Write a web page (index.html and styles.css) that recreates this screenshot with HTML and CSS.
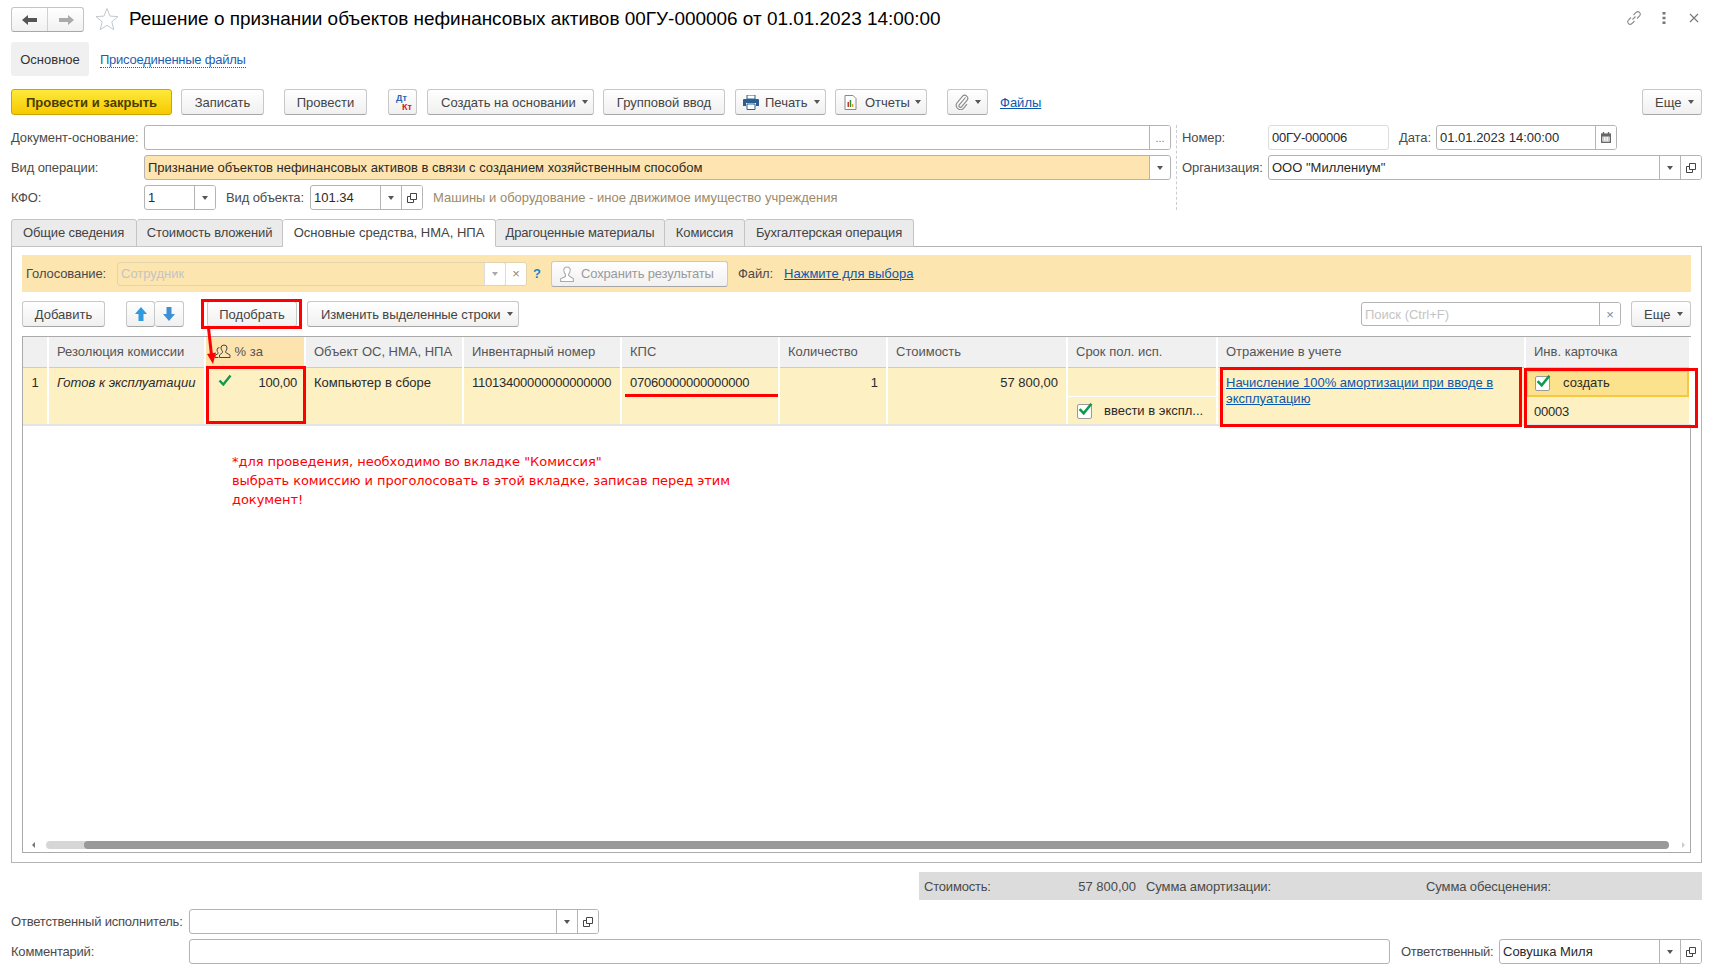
FILE: index.html
```html
<!DOCTYPE html>
<html lang="ru">
  <head>
    <meta charset="UTF-8" />
    <title>Решение о признании объектов нефинансовых активов</title>
    <link rel="stylesheet" href="styles.css">
  </head>
  <body>
    <svg class="sprite" width="0" height="0">
      <symbol id="i-open" viewBox="0 0 12 12">
        <path d="M4.5 1.5h6v6h-6zM4.5 4.5h-3v6h6v-3" fill="none" stroke="#444" stroke-width="1"/>
      </symbol>
      <symbol id="i-check" viewBox="0 0 14 12">
        <path d="M1.5 6.5l3.8 4L12.5 1.5" fill="none" stroke="#0e9a4f" stroke-width="2.4"/>
      </symbol>
    </svg>

    <div class="page">
      <!-- шапка -->
      <div class="title-row">
        <div class="nav">
          <span class="nav-part">
            <svg width="16" height="10" viewBox="0 0 16 10"><path d="M6 0v3h9v4H6v3L0 5z" fill="#555"/></svg>
          </span>
          <span class="nav-part">
            <svg width="16" height="10" viewBox="0 0 16 10"><path d="M10 0v3H1v4h9v3l6-5z" fill="#aaa"/></svg>
          </span>
        </div>
        <svg class="star" width="24" height="24" viewBox="0 0 24 24"><path d="M12 1.5l3 7.6 8 .5-6.200 5.100 2 8-6.800-4.400-6.800 4.400 2-8L1 9.600l8-.5z" fill="#fff" stroke="#c3c9cf"/></svg>
        <h1 class="title">Решение о признании объектов нефинансовых активов 00ГУ-000006 от 01.01.2023 14:00:00</h1>
        <div class="win-tools">
          <svg width="18" height="18" viewBox="0 0 18 18"><path d="M7.500 10.500l3-3M6 8.500l-2.800 2.800a2.500 2.500 0 0 0 3.500 3.500L9.500 12M8.500 6l2.800-2.800a2.500 2.500 0 0 1 3.500 3.500L12 9.500" fill="none" stroke="#8a8a8a" stroke-width="1.100"/></svg>
          <svg class="wt-dots" width="4" height="12" viewBox="0 0 4 12"><path d="M0.500 0h3v2.500h-3zM0.500 4.700h3v2.500h-3zM0.500 9.400h3v2.500h-3z" fill="#777"/></svg>
          <svg width="10" height="10" viewBox="0 0 10 10"><path d="M1 1l8 8M9 1l-8 8" stroke="#777" stroke-width="1.100"/></svg>
        </div>
      </div>

      <div class="subnav">
        <span class="subnav-active">Основное</span>
        <a class="subnav-link">Присоединенные файлы</a>
      </div>

      <!-- командная панель -->
      <div class="command-bar">
        <button class="btn btn-primary b-post-close">Провести и закрыть</button>
        <button class="btn b-save">Записать</button>
        <button class="btn b-post">Провести</button>
        <button class="btn b-dtkt"><span class="dt">Дт</span><span class="kt">Кт</span></button>
        <button class="btn btn-c b-create">Создать на основании<i class="caret"></i></button>
        <button class="btn b-group">Групповой ввод</button>
        <button class="btn btn-c b-print">
          <svg width="16" height="15" viewBox="0 0 16 15"><path d="M4 0h8v4H4z" fill="#fff" stroke="#2b5f8f"/><path d="M1 4h14a1 1 0 0 1 1 1v6h-3V8H3v3H0V5a1 1 0 0 1 1-1z" fill="#2b5f8f"/><path d="M4 9h8v5.500H4z" fill="#fff" stroke="#2b5f8f"/></svg>
          Печать<i class="caret"></i>
        </button>
        <button class="btn btn-c b-reports">
          <svg width="13" height="15" viewBox="0 0 12 15"><path d="M.5.500h8l3 3v11H.5z" fill="#fff" stroke="#888"/><path d="M3 7h1.500v5H3z" fill="#c0392b"/><path d="M5.200 5h1.500v7H5.200z" fill="#2e8b3d"/><path d="M7.400 9h1.500v3H7.400z" fill="#d9a521"/></svg>
          Отчеты<i class="caret"></i>
        </button>
        <button class="btn b-clip">
          <svg width="14" height="16" viewBox="0 0 14 16"><path d="M10.500 3.500L4.200 10.800a1.500 1.500 0 0 0 2.300 2L12 6.300a3 3 0 0 0-4.600-3.900L1.900 9a4.300 4.300 0 0 0 6.600 5.400l3.500-4.200" fill="none" stroke="#888" stroke-width="1.100"/></svg>
          <i class="caret"></i>
        </button>
        <a class="link files-link">Файлы</a>
        <button class="btn btn-c b-more">Еще<i class="caret"></i></button>
      </div>

      <!-- реквизиты -->
      <div class="form-head">
        <div class="form-left">
          <div class="form-row">
            <label class="lbl l-main">Документ-основание:</label>
            <div class="field f-grow"><span class="field-text"></span><span class="field-btn dots">...</span></div>
          </div>
          <div class="form-row">
            <label class="lbl l-main">Вид операции:</label>
            <div class="field f-grow field-warm"><span class="field-text">Признание объектов нефинансовых активов в связи с созданием хозяйственным способом</span><span class="field-btn"><i class="caret"></i></span></div>
          </div>
          <div class="form-row">
            <label class="lbl l-main">КФО:</label>
            <div class="field f-kfo"><span class="field-text">1</span><span class="field-btn"><i class="caret"></i></span></div>
            <label class="lbl l-kind">Вид объекта:</label>
            <div class="field f-kind"><span class="field-text">101.34</span><span class="field-btn"><i class="caret"></i></span><span class="field-btn"><svg class="open-ico"><use href="#i-open"/></svg></span></div>
            <span class="hint">Машины и оборудование - иное движимое имущество учреждения</span>
          </div>
        </div>
        <div class="form-right">
          <div class="form-row">
            <label class="lbl l-right">Номер:</label>
            <div class="field f-num field-soft"><span class="field-text digits">00ГУ-000006</span></div>
            <label class="lbl l-date">Дата:</label>
            <div class="field f-date"><span class="field-text">01.01.2023 14:00:00</span><span class="field-btn">
              <svg width="10" height="11" viewBox="0 0 11 12"><path d="M0 1.500h11V12H0z" fill="#666"/><path d="M2 0h1.500v3H2zM7.500 0H9v3H7.500z" fill="#666"/><path d="M1.500 5h8v5.500h-8z" fill="#fff"/><path d="M2.500 6h1v1h-1zM5 6h1v1H5zM7.500 6h1v1h-1zM2.500 8.200h1v1h-1zM5 8.200h1v1H5zM7.500 8.200h1v1h-1z" fill="#666"/></svg>
            </span></div>
          </div>
          <div class="form-row">
            <label class="lbl l-right">Организация:</label>
            <div class="field f-grow"><span class="field-text">ООО "Миллениум"</span><span class="field-btn"><i class="caret"></i></span><span class="field-btn"><svg class="open-ico"><use href="#i-open"/></svg></span></div>
          </div>
        </div>
      </div>

      <!-- вкладки -->
      <div class="tabs">
        <span class="tab t1">Общие сведения</span>
        <span class="tab t2">Стоимость вложений</span>
        <span class="tab t3 tab-active">Основные средства, НМА, НПА</span>
        <span class="tab t4">Драгоценные материалы</span>
        <span class="tab t5">Комиссия</span>
        <span class="tab t6">Бухгалтерская операция</span>
      </div>

      <div class="panel">
        <div class="vote-band">
          <label class="lbl l-vote">Голосование:</label>
          <div class="field f-vote"><span class="field-text ph">Сотрудник</span><span class="field-btn"><i class="caret caret-light"></i></span><span class="field-btn x-btn">×</span></div>
          <span class="help">?</span>
          <button class="btn b-results">
            <svg width="16" height="16" viewBox="0 0 14 15"><path d="M7 1a3 3 0 0 1 3 3c0 1.500-.8 3-1.500 3.700v1.200L13 12v2.500H1V12l4.500-2.100V7.700C4.800 7 4 5.500 4 4a3 3 0 0 1 3-3z" fill="#fff" stroke="#aaa"/></svg>
            Сохранить результаты
          </button>
          <label class="lbl l-file">Файл:</label>
          <a class="link">Нажмите для выбора</a>
        </div>

        <div class="table-bar">
          <button class="btn b-add">Добавить</button>
          <div class="updown">
            <button class="btn ud-part">
              <svg width="12" height="14" viewBox="0 0 12 14"><path d="M6 0l6 7H8.500v7h-5V7H0z" fill="#2f9ae0"/></svg>
            </button>
            <button class="btn ud-part">
              <svg width="12" height="14" viewBox="0 0 12 14"><path d="M6 14l6-7H8.500V0h-5v7H0z" fill="#3f8fd6"/></svg>
            </button>
          </div>
          <button class="btn b-pick">Подобрать</button>
          <button class="btn btn-c b-change">Изменить выделенные строки<i class="caret"></i></button>
          <div class="field f-search"><span class="field-text ph">Поиск (Ctrl+F)</span><span class="field-btn x-btn">×</span></div>
          <button class="btn btn-c b-more2">Еще<i class="caret"></i></button>
        </div>

        <div class="grid-wrap">
          <table class="grid">
            <colgroup>
              <col class="c-n"><col class="c-res"><col class="c-pct"><col class="c-obj"><col class="c-inv">
              <col class="c-kps"><col class="c-qty"><col class="c-cost"><col class="c-term"><col class="c-acc"><col class="c-card">
            </colgroup>
            <thead>
              <tr>
                <th></th>
                <th>Резолюция комиссии</th>
                <th class="th-warm">
                  <svg class="people" width="17" height="15" viewBox="0 0 17 15"><path d="M10 1a3 3 0 0 1 3 3c0 1.500-.7 2.600-1.300 3.200v1.300L16 11v2.500H5.500V11l3-2.500V7.200C8 6.600 7 5.500 7 4a3 3 0 0 1 3-3zM5.500 3.500a2.500 2.500 0 0 0-2.500 2.500c0 1 .5 2 1 2.500v1L1 11.500v2h3.500" fill="none" stroke="#444"/></svg>
                  % за
                </th>
                <th>Объект ОС, НМА, НПА</th>
                <th>Инвентарный номер</th>
                <th>КПС</th>
                <th>Количество</th>
                <th>Стоимость</th>
                <th>Срок пол. исп.</th>
                <th>Отражение в учете</th>
                <th>Инв. карточка</th>
              </tr>
            </thead>
            <tbody>
              <tr>
                <td class="td-num">1</td>
                <td class="td-it">Готов к эксплуатации</td>
                <td class="td-pct digits"><svg class="vote-check"><use href="#i-check"/></svg>100,00</td>
                <td>Компьютер в сборе</td>
                <td class="digits">11013400000000000000</td>
                <td class="digits">07060000000000000</td>
                <td class="td-r">1</td>
                <td class="td-r">57 800,00</td>
                <td class="td-split">
                  <div class="sub sub-top"></div>
                  <div class="sub sub-check"><span class="box"><svg><use href="#i-check"/></svg></span><span class="sub-text">ввести в экспл...</span></div>
                </td>
                <td><a class="link">Начисление 100% амортизации при вводе в эксплуатацию</a></td>
                <td class="td-split">
                  <div class="sub card-top"><span class="box"><svg><use href="#i-check"/></svg></span><span>создать</span></div>
                  <div class="sub card-num digits">00003</div>
                </td>
              </tr>
            </tbody>
          </table>
          <div class="h-scroll">
            <i class="arr arr-left"></i>
            <div class="h-track"><div class="h-thumb"></div></div>
            <i class="arr arr-right"></i>
          </div>
        </div>
      </div>

      <div class="totals">
        <span class="tot-label">Стоимость:</span>
        <span class="tot-value">57 800,00</span>
        <span class="tot-amort">Сумма амортизации:</span>
        <span>Сумма обесценения:</span>
      </div>

      <div class="bottom">
        <div class="form-row">
          <label class="lbl l-bottom">Ответственный исполнитель:</label>
          <div class="field f-exec"><span class="field-text"></span><span class="field-btn"><i class="caret"></i></span><span class="field-btn"><svg class="open-ico"><use href="#i-open"/></svg></span></div>
        </div>
        <div class="form-row">
          <label class="lbl l-bottom">Комментарий:</label>
          <div class="field f-comment"><span class="field-text"></span></div>
          <label class="lbl l-resp">Ответственный:</label>
          <div class="field f-grow"><span class="field-text">Совушка Миля</span><span class="field-btn"><i class="caret"></i></span><span class="field-btn"><svg class="open-ico"><use href="#i-open"/></svg></span></div>
        </div>
      </div>
    </div>

    <!-- красные пометки поверх формы -->
    <div class="mark m-pick"></div>
    <div class="mark m-pct"></div>
    <div class="mark m-acc"></div>
    <div class="mark m-card"></div>
    <div class="kps-line"></div>
    <svg class="mark-arrow" width="12" height="38" viewBox="0 0 12 38"><path d="M1.500 0l3 27" stroke="#f00" stroke-width="3" fill="none"/><path d="M0 26l9-1.500L6 36z" fill="#f00"/></svg>
    <div class="note">*для проведения, необходимо во вкладке "Комиссия"<br>выбрать комиссию и проголосовать в этой вкладке, записав перед этим<br>документ!</div>
  </body>
</html>
```

FILE: styles.css
```css
* {
  box-sizing: border-box;
}
html,
body {
  margin: 0;
  height: 971px;
  overflow: hidden;
  background: #fff;
}
body {
  position: relative;
  font-family: 'Liberation Sans', Arial, sans-serif;
  font-size: 13px;
  color: #333;
}
.sprite {
  position: absolute;
}
.page {
  width: 1702px;
  padding-left: 11px;
}
.digits {
  letter-spacing: -0.22px;
}

/* шапка */
.title-row {
  display: flex;
  align-items: flex-start;
  height: 42px;
  padding-top: 7px;
}
.nav {
  display: flex;
  width: 73px;
  height: 25px;
  border: 1px solid #c4c4c4;
  border-bottom-color: #a8a8a8;
  border-radius: 3px;
  background: linear-gradient(#fff, #f1f1f1);
}
.nav-part {
  flex: 1;
  display: flex;
  align-items: center;
  justify-content: center;
}
.nav-part + .nav-part {
  border-left: 1px solid #d0d0d0;
}
.star {
  margin-left: 11px;
}
.title {
  margin: 0 0 0 10px;
  font-size: 18.95px;
  font-weight: normal;
  line-height: 24px;
  color: #000;
  white-space: nowrap;
}
.win-tools {
  display: flex;
  align-items: center;
  margin-left: auto;
  height: 22px;
  padding-right: 3px;
}
.wt-dots {
  margin: 0 23px 0 19px;
}

.subnav {
  display: flex;
  align-items: center;
  height: 34px;
}
.subnav-active {
  width: 78px;
  height: 34px;
  line-height: 35px;
  text-align: center;
  background: #f0f0f0;
  border-radius: 3px;
}
.subnav-link {
  margin-left: 11px;
  margin-top: 1px;
  color: #1c5fb0;
  letter-spacing: -0.25px;
  border-bottom: 1px dotted #1c5fb0;
}

/* кнопки */
.btn {
  display: inline-flex;
  align-items: center;
  justify-content: center;
  gap: 6px;
  height: 26px;
  padding: 0;
  font: inherit;
  color: #444;
  border: 1px solid #c8c8c8;
  border-bottom-color: #a6a6a6;
  border-radius: 3px;
  background: linear-gradient(#fff, #f0f0f0);
  white-space: nowrap;
  flex: none;
}
.btn svg {
  flex: none;
}
.btn-c {
  justify-content: flex-start;
  padding-right: 7px;
}
.btn-c .caret {
  margin-left: auto;
}
.btn-primary {
  font-weight: bold;
  color: #4a3c00;
  border-color: #c9a800;
  background: linear-gradient(#fde93a, #f7c900);
}
.caret {
  display: inline-block;
  width: 0;
  height: 0;
  border: 3px solid transparent;
  border-top: 4px solid #555;
  border-bottom: 0;
}
.caret-light {
  border-top-color: #aaa;
}
.command-bar {
  display: flex;
  align-items: center;
  margin-top: 13px;
  height: 26px;
}
.b-post-close { width: 161px; letter-spacing: 0.05px; }
.b-save { width: 83px; margin-left: 9px; }
.b-post { width: 83px; margin-left: 20px; }
.b-dtkt { width: 29px; margin-left: 21px; position: relative; }
.b-create { width: 167px; margin-left: 10px; padding-left: 13px; }
.b-group { width: 122px; margin-left: 9px; }
.b-print { width: 91px; margin-left: 10px; padding-left: 7px; }
.b-reports { width: 92px; margin-left: 9px; padding-left: 8px; padding-right: 6px; gap: 5px; }
.b-reports svg { margin-right: 3px; }
.b-clip { width: 41px; margin-left: 20px; }
.b-more { width: 60px; margin-left: auto; padding-left: 12px; }
.files-link { margin-left: 12px; }
.dt {
  position: absolute;
  left: 7px;
  top: 3px;
  font-size: 9px;
  font-weight: bold;
  color: #2b66b5;
}
.kt {
  position: absolute;
  left: 13px;
  top: 12px;
  font-size: 9px;
  font-weight: bold;
  color: #d01818;
}
.link {
  color: #0b57b0;
  text-decoration: underline;
}

/* реквизиты */
.form-head {
  display: flex;
  margin-top: 10px;
}
.form-left {
  width: 1160px;
  display: flex;
  flex-direction: column;
  gap: 5px;
}
.form-right {
  flex: 1;
  display: flex;
  flex-direction: column;
  gap: 5px;
  margin-left: 5px;
  padding-left: 5px;
  border-left: 1px dashed #ccc;
  height: 85px;
}
.form-row {
  display: flex;
  align-items: center;
  height: 25px;
}
.lbl {
  flex: none;
  color: #4a4a4a;
  letter-spacing: -0.1px;
  white-space: nowrap;
}
.l-main { width: 133px; }
.l-kind { margin-left: 10px; width: 84px; }
.l-right { width: 86px; }
.l-date { margin-left: 10px; width: 37px; }
.l-bottom { width: 178px; letter-spacing: -0.2px; }
.l-resp { margin-left: 11px; width: 98px; letter-spacing: -0.3px; }
.l-vote { width: 91px; }
.l-file { margin-left: 10px; margin-right: 11px; }
.field {
  display: flex;
  height: 25px;
  border: 1px solid #b4b4b4;
  border-radius: 3px;
  background: #fff;
  flex: none;
}
.f-grow { flex: 1; }
.field-warm { background: #fde4b0; }
.field-soft { border-color: #dcdcdc; }
.field-text {
  flex: 1;
  min-width: 0;
  padding-left: 3px;
  line-height: 23px;
  color: #2a2a2a;
  white-space: nowrap;
  overflow: hidden;
}
.field-btn {
  flex: none;
  width: 21px;
  display: flex;
  align-items: center;
  justify-content: center;
  border-left: 1px solid #b4b4b4;
  background: #fff;
  border-radius: 0 2px 2px 0;
}
.dots {
  color: #777;
  font-size: 11px;
}
.open-ico {
  width: 12px;
  height: 12px;
}
.f-kfo { width: 72px; }
.f-kind { width: 113px; }
.f-num { width: 121px; }
.f-date { width: 181px; }
.hint {
  margin-left: 10px;
  color: #9c8a68;
  white-space: nowrap;
}
.ph {
  color: #c4c4c4;
}

/* вкладки */
.tabs {
  display: flex;
  margin-top: 9px;
  height: 27px;
}
.tab {
  height: 28px;
  line-height: 26px;
  text-align: center;
  color: #444;
  background: #ebebeb;
  border: 1px solid #c4c4c4;
  border-left: 0;
  border-radius: 3px 3px 0 0;
  letter-spacing: -0.12px;
  white-space: nowrap;
}
.t1 { width: 126px; border-left: 1px solid #c4c4c4; padding-right: 1px; }
.t2 { width: 146px; }
.t3 { width: 213px; }
.t4 { width: 169px; }
.t5 { width: 80px; }
.t6 { width: 169px; }
.tab-active {
  position: relative;
  background: #fff;
  border-bottom-color: #fff;
  letter-spacing: 0;
}
.panel {
  width: 1691px;
  height: 617px;
  padding: 8px 10px 9px 10px;
  border: 1px solid #b4b4b4;
}
.vote-band {
  display: flex;
  align-items: center;
  height: 37px;
  padding-left: 4px;
  background: #fde5b0;
}
.f-vote {
  width: 410px;
  height: 24px;
  border-color: #e3d3ae;
  background: #fde5b0;
}
.f-vote .field-btn {
  border-left-color: #ddd;
}
.f-vote .field-text {
  line-height: 22px;
}
.x-btn {
  color: #888;
  font-size: 13px;
}
.help {
  width: 24px;
  padding-left: 6px;
  color: #1487c9;
  font-weight: bold;
}
.b-results {
  width: 177px;
  justify-content: flex-start;
  padding-left: 7px;
  gap: 6px;
  color: #9a9a9a;
  letter-spacing: -0.15px;
}
.table-bar {
  display: flex;
  align-items: center;
  margin-top: 9px;
  height: 26px;
}
.b-add { width: 83px; }
.updown {
  display: flex;
  margin-left: 21px;
}
.ud-part { width: 29px; }
.ud-part + .ud-part { border-left: 0; }
.b-pick { width: 90px; margin-left: 23px; }
.b-change { width: 212px; margin-left: 10px; padding-left: 13px; padding-right: 9px; letter-spacing: -0.1px; }
.f-search { width: 260px; height: 24px; margin-left: auto; }
.f-search .field-text { line-height: 24px; }
.b-more2 { width: 60px; margin-left: 10px; padding-left: 12px; }

/* таблица */
.grid-wrap {
  display: flex;
  flex-direction: column;
  margin-top: 9px;
  height: 517px;
  border: 1px solid #aaa;
}
.grid {
  width: 100%;
  table-layout: fixed;
  border-collapse: collapse;
}
.c-n { width: 25px; }
.c-res { width: 157px; }
.c-pct { width: 100px; }
.c-obj { width: 158px; }
.c-inv { width: 158px; }
.c-kps { width: 158px; }
.c-qty { width: 108px; }
.c-cost { width: 180px; }
.c-term { width: 150px; }
.c-acc { width: 308px; }
.c-card { width: 165px; }
.grid th {
  height: 30px;
  padding: 0 8px;
  font-weight: normal;
  text-align: left;
  color: #555;
  background: #f0f0f0;
  border-right: 2px solid #fff;
  border-bottom: 1px solid #ccc;
  white-space: nowrap;
}
.grid .th-warm {
  background: #fde3ae;
}
.people {
  vertical-align: -3px;
}
.grid td {
  height: 58px;
  padding: 7px 8px 0;
  vertical-align: top;
  color: #2a2a2a;
  background: #fdf0c2;
  border-right: 2px solid #fff;
  border-bottom: 2px solid #e4e4e4;
  line-height: 16px;
}
.grid td.td-num { text-align: center; padding-left: 0; padding-right: 0; }
.grid td.td-it { font-style: italic; white-space: nowrap; }
.grid td.td-pct { position: relative; text-align: right; padding-right: 7px; }
.vote-check {
  position: absolute;
  left: 12px;
  top: 6px;
  width: 14px;
  height: 12px;
}
.grid td.td-r { text-align: right; }
.grid td.td-split { padding: 0; }
.sub {
  display: flex;
  align-items: center;
  padding-left: 8px;
}
.sub-top { height: 29px; border-bottom: 1px solid #fff; }
.sub-check { height: 27px; padding-left: 9px; padding-top: 2px; }
.sub-text { margin-left: 12px; white-space: nowrap; }
.box {
  position: relative;
  flex: none;
  width: 15px;
  height: 15px;
  border: 1px solid #9a9a9a;
  border-radius: 2px;
  background: #fff;
}
.box svg {
  position: absolute;
  left: 0;
  top: -3px;
  width: 15px;
  height: 13px;
}
.card-top {
  height: 27px;
  margin-top: 2px;
  padding-left: 7px;
  background: #fde28d;
  border: 2px solid #f7c73f;
}
.card-top span:last-child { margin-left: 13px; }
.card-num { height: 27px; padding-top: 3px; }
.h-scroll {
  display: flex;
  align-items: center;
  margin-top: auto;
  margin-bottom: 3px;
  height: 8px;
  padding: 0 5px 0 9px;
}
.h-track {
  flex: 1;
  height: 8px;
  margin: 0 13px 0 11px;
  padding-left: 38px;
  background: #d6d6d6;
  border-radius: 4px;
}
.h-thumb {
  height: 8px;
  background: #999;
  border-radius: 4px;
}
.arr {
  width: 0;
  height: 0;
  border: 3px solid transparent;
}
.arr-left { border-right-color: #777; border-left: 0; }
.arr-right { border-left-color: #ccc; border-right: 0; }

/* итоги и подвал */
.totals {
  display: flex;
  align-items: center;
  margin: 9px 0 0 908px;
  width: 783px;
  height: 28px;
  padding-left: 5px;
  background: #dcdcdc;
  color: #4a4a4a;
  letter-spacing: -0.1px;
}
.tot-label { width: 103px; letter-spacing: -0.2px; }
.tot-value { width: 109px; text-align: right; letter-spacing: 0; }
.tot-amort { margin-left: 10px; width: 280px; }
.bottom {
  display: flex;
  flex-direction: column;
  gap: 5px;
  margin-top: 9px;
}
.f-exec { width: 410px; }
.f-comment { width: 1201px; }

/* красные пометки */
.mark {
  position: absolute;
  border: 3px solid #f00;
}
.m-pick { left: 201px; top: 299px; width: 101px; height: 30px; }
.m-pct { left: 206px; top: 366px; width: 100px; height: 58px; }
.m-acc { left: 1220px; top: 367px; width: 302px; height: 60px; }
.m-card { left: 1524px; top: 368px; width: 174px; height: 60px; }
.kps-line {
  position: absolute;
  left: 625px;
  top: 394px;
  width: 153px;
  height: 3px;
  background: #f00;
}
.mark-arrow {
  position: absolute;
  left: 207px;
  top: 328px;
}
.note {
  position: absolute;
  left: 232px;
  top: 452px;
  font-family: 'DejaVu Sans', sans-serif;
  font-size: 13px;
  letter-spacing: -0.05px;
  line-height: 19px;
  color: #f00;
  white-space: nowrap;
}
```
